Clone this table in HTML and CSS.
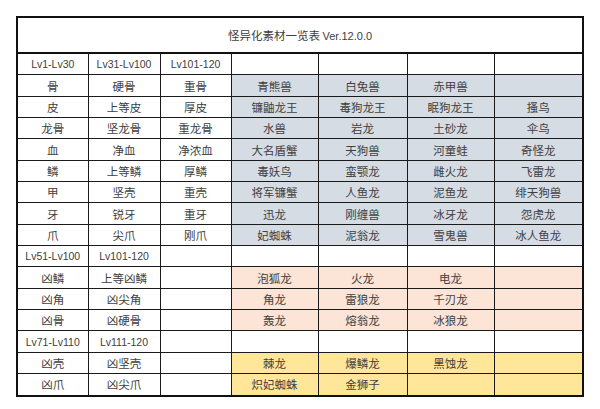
FILE: index.html
```html
<!DOCTYPE html>
<html lang="zh">
<head>
<meta charset="utf-8">
<title>怪异化素材一览表</title>
<link rel="stylesheet" href="styles.css">
</head>
<body>
<table class="sheet">
  <colgroup>
    <col class="c-s"><col class="c-m"><col class="c-s">
    <col class="c-l"><col class="c-xl"><col class="c-l"><col class="c-xl">
  </colgroup>
  <tr class="title-row"><td colspan="7">怪异化素材一览表 <span class="ver">Ver.12.0.0</span></td></tr>
  <tr class="row"><td class="lv">Lv1-Lv30</td><td class="lv">Lv31-Lv100</td><td class="lv">Lv101-120</td><td></td><td></td><td></td><td></td></tr>
  <tr class="row blue"><td>骨</td><td>硬骨</td><td>重骨</td><td class="m">青熊兽</td><td class="m">白兔兽</td><td class="m">赤甲兽</td><td class="m"></td></tr>
  <tr class="row blue"><td>皮</td><td>上等皮</td><td>厚皮</td><td class="m">镰鼬龙王</td><td class="m">毒狗龙王</td><td class="m">眠狗龙王</td><td class="m">搔鸟</td></tr>
  <tr class="row blue"><td>龙骨</td><td>坚龙骨</td><td>重龙骨</td><td class="m">水兽</td><td class="m">岩龙</td><td class="m">土砂龙</td><td class="m">伞鸟</td></tr>
  <tr class="row blue"><td>血</td><td>净血</td><td>净浓血</td><td class="m">大名盾蟹</td><td class="m">天狗兽</td><td class="m">河童蛙</td><td class="m">奇怪龙</td></tr>
  <tr class="row blue"><td>鳞</td><td>上等鳞</td><td>厚鳞</td><td class="m">毒妖鸟</td><td class="m">蛮颚龙</td><td class="m">雌火龙</td><td class="m">飞雷龙</td></tr>
  <tr class="row blue"><td>甲</td><td>坚壳</td><td>重壳</td><td class="m">将军镰蟹</td><td class="m">人鱼龙</td><td class="m">泥鱼龙</td><td class="m">绯天狗兽</td></tr>
  <tr class="row blue"><td>牙</td><td>锐牙</td><td>重牙</td><td class="m">迅龙</td><td class="m">刚缠兽</td><td class="m">冰牙龙</td><td class="m">怨虎龙</td></tr>
  <tr class="row blue"><td>爪</td><td>尖爪</td><td>刚爪</td><td class="m">妃蜘蛛</td><td class="m">泥翁龙</td><td class="m">雪鬼兽</td><td class="m">冰人鱼龙</td></tr>
  <tr class="row"><td class="lv">Lv51-Lv100</td><td class="lv">Lv101-120</td><td></td><td></td><td></td><td></td><td></td></tr>
  <tr class="row pink"><td>凶鳞</td><td>上等凶鳞</td><td></td><td class="m">泡狐龙</td><td class="m">火龙</td><td class="m">电龙</td><td class="m"></td></tr>
  <tr class="row pink"><td>凶角</td><td>凶尖角</td><td></td><td class="m">角龙</td><td class="m">雷狼龙</td><td class="m">千刃龙</td><td class="m"></td></tr>
  <tr class="row pink"><td>凶骨</td><td>凶硬骨</td><td></td><td class="m">轰龙</td><td class="m">熔翁龙</td><td class="m">冰狼龙</td><td class="m"></td></tr>
  <tr class="row"><td class="lv">Lv71-Lv110</td><td class="lv">Lv111-120</td><td></td><td></td><td></td><td></td><td></td></tr>
  <tr class="row yellow"><td>凶壳</td><td>凶坚壳</td><td></td><td class="m">棘龙</td><td class="m">爆鳞龙</td><td class="m">黑蚀龙</td><td class="m"></td></tr>
  <tr class="row yellow"><td>凶爪</td><td>凶尖爪</td><td></td><td class="m">炽妃蜘蛛</td><td class="m">金狮子</td><td class="m"></td><td class="m"></td></tr>
</table>
</body>
</html>
```

FILE: styles.css
```css
html, body {
  margin: 0;
  padding: 0;
  background: #ffffff;
}

body {
  padding: 16px 0 0 16px;
  font-family: "Noto Sans CJK SC", sans-serif;
  color: #404040;
}

.sheet {
  border-collapse: collapse;
  table-layout: fixed;
  width: 568px;
  border: 2px solid #111;
  font-size: 11.5px;
}

.c-s { width: 71px; }
.c-m { width: 72px; }
.c-l { width: 87px; }
.c-xl { width: 89px; }

.sheet td {
  border: 1px solid #1a1a1a;
  padding: 0;
  text-align: center;
  vertical-align: middle;
  line-height: 14px;
  overflow: hidden;
  white-space: nowrap;
}

.title-row td {
  height: 34px;
  border-bottom: 2px solid #111;
}

.ver {
  font-family: "Liberation Sans", "Noto Sans CJK SC", sans-serif;
  font-size: 11px;
}

.row td {
  height: 20.35px;
}

.lv {
  font-family: "Liberation Sans", "Noto Sans CJK SC", sans-serif;
  font-size: 10.5px;
}

.blue .m { background: #d6dce4; }
.pink .m { background: #fce4d6; }
.yellow .m { background: #ffe699; }
```
